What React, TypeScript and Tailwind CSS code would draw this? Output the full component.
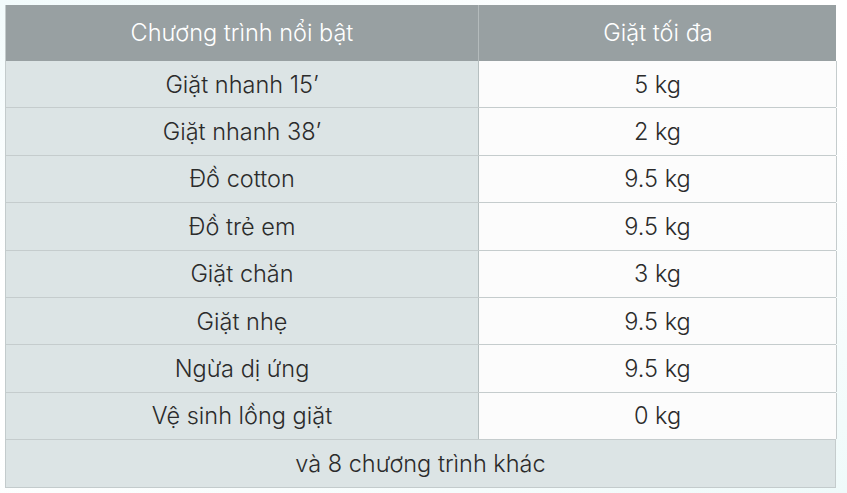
const rows: [string, string][] = [
  ["Giặt nhanh 15’", "5 kg"],
  ["Giặt nhanh 38’", "2 kg"],
  ["Đồ cotton", "9.5 kg"],
  ["Đồ trẻ em", "9.5 kg"],
  ["Giặt chăn", "3 kg"],
  ["Giặt nhẹ", "9.5 kg"],
  ["Ngừa dị ứng", "9.5 kg"],
  ["Vệ sinh lồng giặt", "0 kg"],
];

export default function App() {
  return (
    <div className="h-[493px] w-[847px] bg-[linear-gradient(160deg,#f2fbfc_0%,#ffffff_35%,#ffffff_55%,#effafa_100%)] pl-[5px] pt-[5px] font-['Inter','Liberation_Sans',Arial,sans-serif] text-[23.5px] font-light">
      <div className="w-[831px] border-b border-l border-[#c3cbcc]">
        {/* Header */}
        <div className="grid h-[56px] grid-cols-[473px_358px] bg-[#98a0a2] text-white">
          <div className="flex items-center justify-center border-r border-[#b4bbbc]">
            Chương trình nổi bật
          </div>
          <div className="flex items-center justify-center">Giặt tối đa</div>
        </div>

        {/* Rows */}
        {rows.map(([name, kg]) => (
          <div
            key={name}
            className="grid h-[47.4px] grid-cols-[473px_358px] border-b border-[#c5cccd] text-[#2b2b2b]"
          >
            <div className="flex items-center justify-center border-r border-[#b6bfc0] bg-[#dce4e5]">
              {name}
            </div>
            <div className="flex items-center justify-center border-r border-[#c5cccd] bg-[#fcfcfc]">
              {kg}
            </div>
          </div>
        ))}

        {/* Footer */}
        <div className="flex h-[47px] items-center justify-center border-r border-[#c5cccd] bg-[#dce4e5] text-[#2b2b2b]">
          và 8 chương trình khác
        </div>
      </div>
    </div>
  );
}
